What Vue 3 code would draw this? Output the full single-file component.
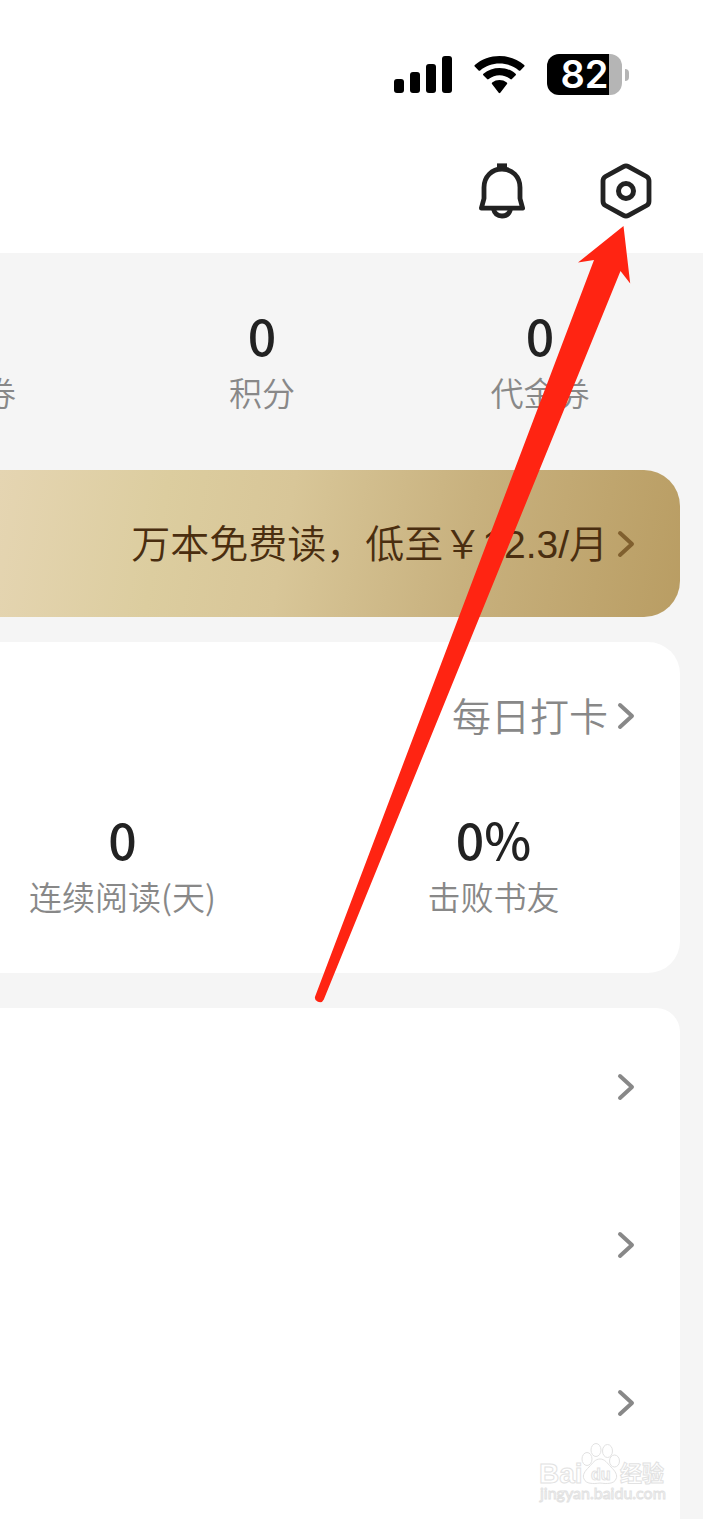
<script setup>
const points = [
  { value: '', label: '券', clipped: true },
  { value: '0', label: '积分' },
  { value: '0', label: '代金券' },
]
const reading = [
  { value: '0', label: '连续阅读(天)' },
  { value: '0%', label: '击败书友' },
]
const rows = [1, 2, 3]
</script>

<template>
  <main class="page">
    <header class="header">
      <div class="status">
        <svg class="signal" viewBox="0 0 58 37" aria-hidden="true">
          <rect x="0" y="23" width="10" height="14" rx="3" />
          <rect x="16" y="16" width="10" height="21" rx="3" />
          <rect x="32" y="8" width="10" height="29" rx="3" />
          <rect x="48" y="0" width="10" height="37" rx="3" />
        </svg>
        <svg class="wifi" viewBox="0 0 51 38" aria-hidden="true">
          <path d="M0.8 10.6 Q0 9.9 0.8 9.1 C14.5 -2.9 36.5 -2.9 50.2 9.1 Q51 9.9 50.2 10.6 L46.4 14.4 Q45.6 15 44.8 14.4 C34 5.2 17 5.2 6.2 14.4 Q5.4 15 4.6 14.4 Z" />
          <path d="M9.3 19.3 Q8.6 18.5 9.4 17.8 C18.5 9.9 32.5 9.9 41.6 17.8 Q42.4 18.5 41.7 19.3 L37.9 23.1 Q37.1 23.7 36.3 23.1 C30 17.8 21 17.8 14.7 23.1 Q13.9 23.7 13.1 23.1 Z" />
          <path d="M18 28 Q17.3 27.2 18.2 26.5 C22.5 23.2 28.5 23.2 32.8 26.5 Q33.7 27.2 33 28 L26.3 36.8 Q25.5 37.6 24.7 36.8 Z" />
        </svg>
        <div class="battery">
          <div class="cell"><span>82</span></div>
          <i class="nub"></i>
        </div>
      </div>
      <nav class="actions">
        <button class="icon" type="button" aria-label="消息">
          <svg width="48" height="56" viewBox="0 0 48 56" fill="none" stroke="#222" stroke-width="4.8">
            <path d="M3.4 45.2 L6 35.5 V24.5 C6 13.5 14 6 24 6 S42 13.5 42 24.5 V35.5 L44.6 45.2 Z" stroke-linejoin="round" />
            <path d="M19 2.8 H29" />
            <path d="M15.5 46 C16.5 50.5 19.5 53 24 53 S31.5 50.5 32.5 46" />
          </svg>
        </button>
        <button class="icon" type="button" aria-label="设置">
          <svg width="52" height="56" viewBox="0 0 52 56" fill="none" stroke="#222" stroke-width="4.8">
            <path d="M23.5 3.6 Q26 2.2 28.5 3.6 L46.5 13.5 Q49 15 49 17.8 V38.2 Q49 41 46.5 42.5 L28.5 52.4 Q26 53.8 23.5 52.4 L5.5 42.5 Q3 41 3 38.2 V17.8 Q3 15 5.5 13.5 Z" />
            <circle cx="26" cy="28" r="7.5" stroke-width="5" />
          </svg>
        </button>
      </nav>
    </header>

    <section class="stats points">
      <div v-for="p in points" :key="p.label" class="stat" :class="{ clipped: p.clipped }">
        <strong>{{ p.value }}</strong>
        <span>{{ p.label }}</span>
      </div>
    </section>

    <a class="banner" href="#vip">
      <span>万本免费读，低至￥12.3/月</span>
      <svg class="chevron" viewBox="0 0 18 28"><path d="M3 3 L15 14 L3 25" /></svg>
    </a>

    <section class="card reading">
      <a class="daily" href="#daily">
        <span>每日打卡</span>
        <svg class="chevron" viewBox="0 0 18 28"><path d="M3 3 L15 14 L3 25" /></svg>
      </a>
      <div class="stats record">
        <div v-for="r in reading" :key="r.label" class="stat">
          <strong>{{ r.value }}</strong>
          <span>{{ r.label }}</span>
        </div>
      </div>
    </section>

    <section class="card menu">
      <button v-for="r in rows" :key="r" class="row" type="button" aria-label="打开">
        <svg class="chevron" viewBox="0 0 18 28"><path d="M3 3 L15 14 L3 25" /></svg>
      </button>
    </section>

    <svg class="pointer" viewBox="0 0 330 790" aria-hidden="true">
      <path d="M313.5 6 L268 42.5 L284 40 L5.3 776 A4.6 4.6 0 0 0 13.8 779.5 L310.5 51 L320.2 63.5 Z" />
    </svg>

    <svg class="watermark" viewBox="0 0 132 66" aria-hidden="true">
      <g class="mark">
        <ellipse cx="51" cy="19" rx="5" ry="6.5" />
        <ellipse cx="60" cy="10" rx="5" ry="6.5" />
        <ellipse cx="71.5" cy="11" rx="5" ry="6.5" />
        <ellipse cx="78.5" cy="21" rx="5" ry="6" />
        <path d="M64 19 C69 19 71 23 75 27 C79 31 82 35 80 39 C78 44 71 44 64 43 C57 44 50 44 48 39 C46 35 49 31 53 27 C57 23 59 19 64 19 Z" />
        <text x="3" y="43" class="bai">Bai</text>
        <text x="55" y="40" class="du">du</text>
        <text x="84" y="41" class="cn">经验</text>
        <text x="4" y="59" class="url">jingyan.baidu.com</text>
      </g>
    </svg>
  </main>
</template>

<style>
body {
  margin: 0;
  background: #f5f5f5;
}
</style>

<style scoped>
.page {
  position: relative;
  display: flex;
  flex-direction: column;
  box-sizing: border-box;
  min-height: 100vh;
  overflow: hidden;
  background: #f5f5f5;
  color: #222;
  font-family: "Liberation Sans", "Noto Sans CJK SC", sans-serif;
}
button {
  padding: 0;
  border: 0;
  background: none;
}
a {
  color: inherit;
  text-decoration: none;
}
.header {
  padding-bottom: 20px;
  background: #fff;
}
.status {
  display: flex;
  align-items: center;
  justify-content: flex-end;
  height: 149px;
  padding-right: 74px;
}
.signal {
  width: 58px;
  height: 37px;
  margin-right: 22px;
}
.wifi {
  width: 51px;
  height: 38px;
  margin-right: 22px;
}
.battery {
  display: flex;
  align-items: center;
  gap: 3px;
}
.cell {
  width: 75px;
  height: 41px;
  border-radius: 12px;
  background: linear-gradient(90deg, #000 62px, #b5b5b5 62px);
  color: #fff;
  font: 600 38px/41px Inter, sans-serif;
  text-align: center;
}
.nub {
  width: 4px;
  height: 12px;
  border-radius: 0 6px 6px 0;
  background: #b5b5b5;
}
.actions {
  display: flex;
  align-items: center;
  justify-content: flex-end;
  gap: 74px;
  height: 84px;
  padding-right: 51px;
}
.icon,
.icon svg {
  display: block;
}
.stats {
  display: grid;
}
.points {
  grid-template-columns: 123fr 278fr 278fr;
  padding: 56px 24px 58px 0;
}
.stat {
  display: flex;
  flex-direction: column;
  align-items: center;
  gap: 13px;
}
.stat.clipped {
  align-items: flex-start;
  margin-left: -17px;
}
.stat strong {
  height: 50px;
  font: 500 50px/50px "Noto Sans CJK SC", sans-serif;
}
.stat span {
  color: #888;
  font: 350 33px/40px "Noto Sans CJK SC", sans-serif;
  white-space: nowrap;
}
.banner,
.daily {
  display: flex;
  align-items: center;
  justify-content: flex-end;
  gap: 9px;
  padding-right: 45px;
  font-size: 39px;
  font-weight: 350;
}
.banner span,
.daily span {
  padding-bottom: 5px;
}
.banner {
  height: 147px;
  margin: 0 23px 25px 0;
  border-radius: 0 36px 36px 0;
  background: linear-gradient(100deg, #e5d5b2 0%, #dccd9f 24%, #d8c698 42%, #c8b17e 68%, #b99d63 100%);
  color: #4a2e10;
}
.chevron {
  flex: none;
  width: 18px;
  height: 28px;
  fill: none;
  stroke: #888;
  stroke-width: 4;
  stroke-linecap: round;
  stroke-linejoin: round;
}
.banner .chevron {
  stroke: #80602f;
}
.card {
  margin-right: 23px;
  background: #fff;
}
.reading {
  margin-bottom: 35px;
  padding: 44px 0 57px;
  border-radius: 0 32px 32px 0;
}
.daily {
  height: 60px;
  margin-bottom: 67px;
  color: #888;
}
.record {
  grid-template-columns: 245fr 373fr;
  column-gap: 62px;
}
.menu {
  flex: 1;
  border-radius: 0 24px 0 0;
}
.row {
  display: flex;
  align-items: center;
  justify-content: flex-end;
  width: 100%;
  height: 158px;
  padding-right: 45px;
}
.pointer {
  position: absolute;
  top: 220px;
  right: 63px;
  width: 330px;
  height: 790px;
  fill: #ff2412;
}
.watermark {
  position: absolute;
  right: 35px;
  bottom: 13px;
  width: 132px;
  height: 66px;
  overflow: visible;
}
.mark {
  fill: #fff;
  stroke: #e2e2e2;
  stroke-width: 1;
}
.bai {
  font: 700 28px "Liberation Sans", sans-serif;
}
.du {
  font: 700 16px "Liberation Sans", sans-serif;
}
.cn {
  font: 700 22px "Noto Sans CJK SC", sans-serif;
}
.url {
  font: 400 16px Lato, sans-serif;
}
</style>
